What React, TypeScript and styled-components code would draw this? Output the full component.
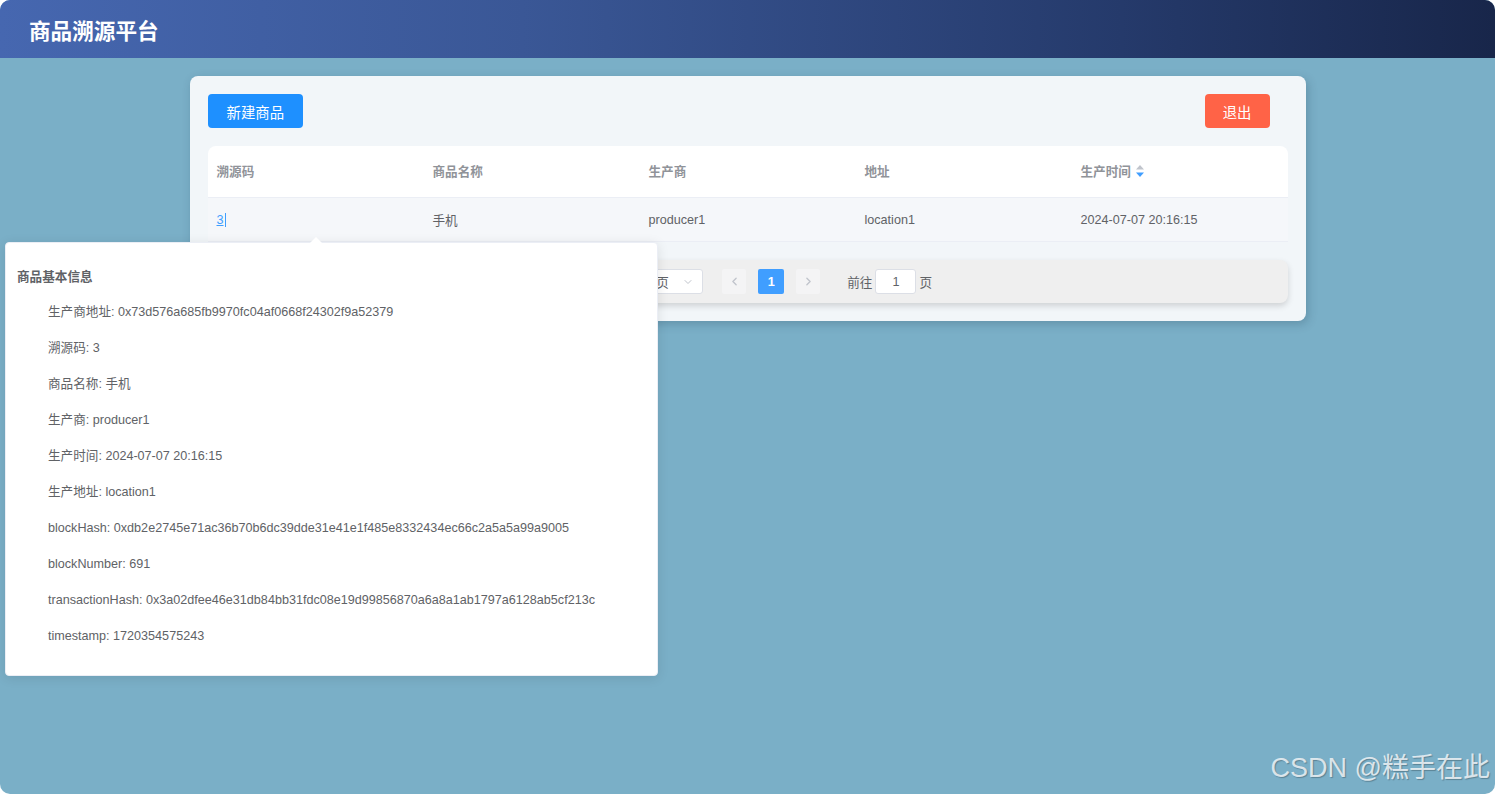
import styled, { createGlobalStyle } from "styled-components";
import { ChevronDown, ChevronLeft, ChevronRight } from "lucide-react";

const GlobalStyle = createGlobalStyle`
    * {
        box-sizing: border-box;
    }

    body {
        margin: 0;
        background: #ffffff;
        font-family: "Liberation Sans", Arial, "Noto Sans CJK SC", sans-serif;
        font-size: 12.6px;
        color: #606266;
    }
`;

const Page = styled.div`
    position: relative;
    height: 794px;
    border-radius: 10px;
    overflow: hidden;
    background: #7aafc7;
`;

const Header = styled.header`
    height: 58px;
    display: flex;
    align-items: center;
    padding-left: 29px;
    background: linear-gradient(90deg, #4667b0 0%, #3a5796 35%, #253a6b 75%, #18264a 100%);
`;

const Title = styled.h1`
    margin: 0;
    color: #ffffff;
    font-size: 21.6px;
    font-weight: 700;
`;

const Card = styled.main`
    width: 1116px;
    margin: 18px auto 0;
    padding: 18px;
    background: #f2f6f9;
    border-radius: 8px;
    box-shadow: 2px 3px 10px rgba(30, 60, 80, 0.25);
`;

const Toolbar = styled.div`
    display: flex;
    justify-content: space-between;
    padding-right: 18px;
`;

const Button = styled.button<{ $tone: "primary" | "danger" }>`
    height: 34px;
    padding: 0 ${(p) => (p.$tone === "primary" ? "19px" : "18px")};
    border: none;
    border-radius: 4px;
    color: #ffffff;
    font-family: inherit;
    font-size: 14.4px;
    background: ${(p) => (p.$tone === "primary" ? "#1e90ff" : "#ff6347")};
    cursor: pointer;
`;

const Table = styled.div`
    margin-top: 18px;
    background: #ffffff;
    border-radius: 8px 8px 0 0;
`;

const Row = styled.div<{ $head?: boolean }>`
    display: grid;
    grid-template-columns: repeat(5, 216px);
    height: ${(p) => (p.$head ? "52px" : "44px")};
    padding-bottom: ${(p) => (p.$head ? "2px" : "0")};
    align-items: center;
    background: ${(p) => (p.$head ? "transparent" : "#f5f7fa")};
    border-bottom: 1px solid #ebeef5;
`;

const Cell = styled.div<{ $head?: boolean }>`
    display: flex;
    align-items: center;
    gap: 5px;
    padding-left: 9px;
    color: ${(p) => (p.$head ? "#909399" : "#606266")};
    font-weight: ${(p) => (p.$head ? 700 : 400)};
`;

const Link = styled.a`
    color: #409eff;
    text-decoration: underline;
    border-right: 1px solid #409eff;
    padding-right: 1px;
`;

const Pager = styled.div`
    margin-top: 18px;
    height: 43px;
    display: flex;
    align-items: center;
    justify-content: center;
    padding-left: 2px;
    background: #efefef;
    border-radius: 8px;
    box-shadow: 0 3px 6px rgba(0, 0, 0, 0.15);
    color: #606266;
`;

const Total = styled.span`
    margin-right: 9px;
`;

const SizeSelect = styled.div`
    width: 90px;
    height: 25px;
    display: flex;
    align-items: center;
    justify-content: space-between;
    padding: 0 8px 0 12px;
    background: #ffffff;
    border: 1px solid #dcdfe6;
    border-radius: 3px;
    margin-right: 19px;
`;

const NavButton = styled.span<{ $active?: boolean }>`
    min-width: ${(p) => (p.$active ? "26px" : "24px")};
    height: 25px;
    display: flex;
    align-items: center;
    justify-content: center;
    margin-right: 12px;
    border-radius: 2px;
    font-weight: 700;
    color: ${(p) => (p.$active ? "#ffffff" : "#c0c4cc")};
    background: ${(p) => (p.$active ? "#409eff" : "#f4f4f5")};
`;

const Jumper = styled.span`
    display: flex;
    align-items: center;
    gap: 3px;
    margin-left: 15px;
`;

const JumpInput = styled.span`
    width: 41px;
    height: 25px;
    display: flex;
    align-items: center;
    justify-content: center;
    background: #ffffff;
    border: 1px solid #dcdfe6;
    border-radius: 3px;
`;

const Popover = styled.div`
    position: absolute;
    left: 5px;
    top: 242px;
    width: 653px;
    padding: 12px 12px 12px 11px;
    background: #ffffff;
    border: 1px solid #ebeef5;
    border-radius: 4px;
    box-shadow: 0 2px 12px rgba(0, 0, 0, 0.1);

    &::before {
        content: "";
        position: absolute;
        top: -6px;
        left: 304px;
        border: 6px solid transparent;
        border-top: 0;
        border-bottom-color: #ffffff;
    }
`;

const PopTitle = styled.h4`
    margin: 14px 0 0;
    line-height: 16px;
    font-size: 12.6px;
    font-weight: 700;
    color: #606266;
`;

const InfoList = styled.ul`
    list-style: none;
    margin: 9px 0 9px;
    padding-left: 31px;
`;

const InfoItem = styled.li`
    height: 36px;
    line-height: 36px;
    color: #606266;
    white-space: nowrap;
`;

const Watermark = styled.div`
    position: absolute;
    right: 5px;
    bottom: 9px;
    font-size: 27px;
    color: rgba(240, 244, 247, 0.85);
    text-shadow: 1px 1px 1px rgba(0, 0, 0, 0.25);
`;

const SortIcon = () => (
    <svg width="8" height="12" viewBox="0 0 8 12">
        <path d="M4 0 L8 4.5 H0 Z" fill="#c0c4cc" />
        <path d="M4 12 L8 7.5 H0 Z" fill="#409eff" />
    </svg>
);

const info: [string, string][] = [
    ["生产商地址", "0x73d576a685fb9970fc04af0668f24302f9a52379"],
    ["溯源码", "3"],
    ["商品名称", "手机"],
    ["生产商", "producer1"],
    ["生产时间", "2024-07-07 20:16:15"],
    ["生产地址", "location1"],
    ["blockHash", "0xdb2e2745e71ac36b70b6dc39dde31e41e1f485e8332434ec66c2a5a5a99a9005"],
    ["blockNumber", "691"],
    ["transactionHash", "0x3a02dfee46e31db84bb31fdc08e19d99856870a6a8a1ab1797a6128ab5cf213c"],
    ["timestamp", "1720354575243"],
];

const App = () => {
    return (
        <Page>
            <GlobalStyle />
            <Header>
                <Title>商品溯源平台</Title>
            </Header>

            <Card>
                <Toolbar>
                    <Button $tone="primary">新建商品</Button>
                    <Button $tone="danger">退出</Button>
                </Toolbar>

                <Table>
                    <Row $head>
                        <Cell $head>溯源码</Cell>
                        <Cell $head>商品名称</Cell>
                        <Cell $head>生产商</Cell>
                        <Cell $head>地址</Cell>
                        <Cell $head>
                            生产时间 <SortIcon />
                        </Cell>
                    </Row>
                    <Row>
                        <Cell>
                            <Link>3</Link>
                        </Cell>
                        <Cell>手机</Cell>
                        <Cell>producer1</Cell>
                        <Cell>location1</Cell>
                        <Cell>2024-07-07 20:16:15</Cell>
                    </Row>
                </Table>

                <Pager>
                    <Total>共 1 条</Total>
                    <SizeSelect>
                        10条/页 <ChevronDown size={12} color="#c0c4cc" />
                    </SizeSelect>
                    <NavButton>
                        <ChevronLeft size={13} strokeWidth={2.5} />
                    </NavButton>
                    <NavButton $active>1</NavButton>
                    <NavButton>
                        <ChevronRight size={13} strokeWidth={2.5} />
                    </NavButton>
                    <Jumper>
                        前往 <JumpInput>1</JumpInput> 页
                    </Jumper>
                </Pager>
            </Card>

            <Popover>
                <PopTitle>商品基本信息</PopTitle>
                <InfoList>
                    {info.map(([k, v]) => (
                        <InfoItem key={k}>
                            {k}: {v}
                        </InfoItem>
                    ))}
                </InfoList>
            </Popover>

            <Watermark>CSDN @糕手在此</Watermark>
        </Page>
    );
};

export default App;
